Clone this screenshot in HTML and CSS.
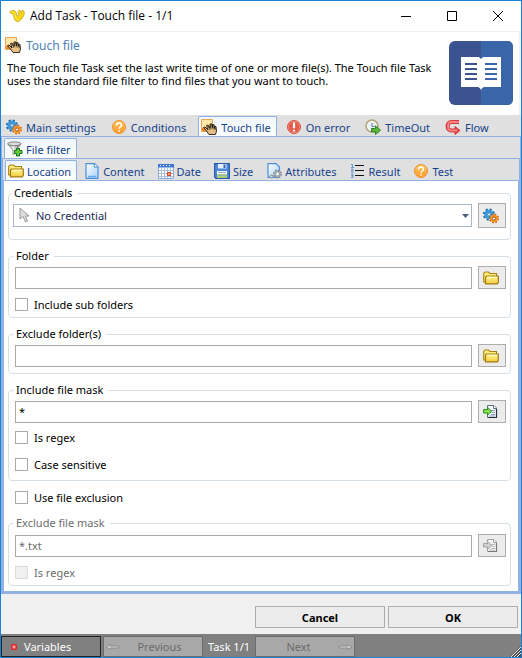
FILE: index.html
```html
<!DOCTYPE html>
<html lang="en">
<head>
<meta charset="utf-8">
<title>Add Task - Touch file - 1/1</title>
<link rel="stylesheet" href="styles.css">
</head>
<body>
<svg class="defs" aria-hidden="true">
  <defs>
    <linearGradient id="gold" x1="0" y1="0" x2="0" y2="1"><stop offset="0" stop-color="#fff79a"/><stop offset="1" stop-color="#f3cb3c"/></linearGradient>
    <linearGradient id="orange" x1="0" y1="0" x2="0" y2="1"><stop offset="0" stop-color="#ffc860"/><stop offset="1" stop-color="#fb9a2c"/></linearGradient>
    <linearGradient id="sheet" x1="0" y1="0" x2="1" y2="1"><stop offset="0" stop-color="#ffffff"/><stop offset="1" stop-color="#a9d0f5"/></linearGradient>
    <linearGradient id="metal" x1="0" y1="0" x2="1" y2="0"><stop offset="0" stop-color="#777"/><stop offset=".4" stop-color="#f4f4f4"/><stop offset="1" stop-color="#555"/></linearGradient>
  </defs>
  <symbol id="i-gears" viewBox="0 0 16 16">
    <circle cx="6" cy="6.500" r="5" fill="none" stroke="#1d6aa8" stroke-width="2.200" stroke-dasharray="2.100 1.827"/>
    <circle cx="6" cy="6.500" r="3.300" fill="#8cc8f0" stroke="#3a98dc" stroke-width="3"/>
    <circle cx="6" cy="6.500" r="1.400" fill="#e4f2fb" stroke="#1f6fae" stroke-width=".6"/>
    <circle cx="11" cy="10.500" r="4.100" fill="none" stroke="#d4620a" stroke-width="1.800" stroke-dasharray="1.700 1.520"/>
    <circle cx="11" cy="10.500" r="2.700" fill="#fff" stroke="#f7941e" stroke-width="2.200"/>
    <circle cx="11" cy="10.500" r="1.500" fill="#fff" stroke="#8f3f08" stroke-width=".8"/>
  </symbol>
  <symbol id="i-question" viewBox="0 0 16 16">
    <circle cx="8" cy="8" r="6.500" fill="url(#orange)" stroke="#f0912c"/>
    <path d="M5.500 6.500C5.500 3.300 10.500 3.300 10.500 6.200C10.500 8 8 8 8 9.800M8 11.200V12.800" fill="none" stroke="#fff" stroke-width="1.500"/>
  </symbol>
  <symbol id="i-touch" viewBox="0 0 16 16">
    <path d="M.5 .5H11.500V12.500H.5Z" fill="#ffe5a6" stroke="#e5a650"/>
    <path d="M1 9L5 8L6 12H1Z" fill="#e58b28"/>
    <path d="M2.500 8.500L4 8L7 11L5.500 6.500L7 6L9 9V5L10.500 4.800L11.500 9V5.500L13 5.600L13.500 9.500V7L15 7.500L15.500 12L14.500 15.500H8L5.500 12Z" fill="#e6be86" stroke="#241a10" stroke-width=".9"/>
    <path d="M7 7L9 11M9.500 5.500L10 10M12 6L12 10.500M14.200 8V11" stroke="#241a10" stroke-width=".7"/>
  </symbol>
  <symbol id="i-error" viewBox="0 0 16 16">
    <circle cx="8" cy="8" r="6.500" fill="#e65a49" stroke="#d4513f"/>
    <circle cx="8" cy="8" r="5.700" fill="none" stroke="#f39a8c" stroke-width=".7"/>
    <path d="M8 3.500V9.200M8 10.700V12.600" stroke="#fff" stroke-width="2.200"/>
  </symbol>
  <symbol id="i-timeout" viewBox="0 0 16 16">
    <circle cx="7" cy="7" r="6" fill="#ececec" stroke="#b0a375" stroke-width="1.500"/>
    <circle cx="7" cy="7" r="4.300" fill="#e5edf5" stroke="#fff"/>
    <path d="M7 4V7.500H9.500" fill="none" stroke="#667f99"/>
    <path d="M6.500 9.500H10.500V6.800L15.500 11.200L10.500 15.500V12.800H6.500Z" fill="#5abb39" stroke="#257719" stroke-width=".9"/>
  </symbol>
  <symbol id="i-flow" viewBox="0 0 16 16">
    <path d="M14 3H6.500C1.300 3 1.300 11.500 6.500 11.500H11" fill="none" stroke="#d9363b" stroke-width="4"/>
    <path d="M10 7.500L15 11.500L10 15.500Z" fill="#e94c50" stroke="#cf3538"/>
    <path d="M14 3H6.500C1.800 3 1.800 11.500 6.500 11.500H12" fill="none" stroke="#ff8380" stroke-width="2"/>
  </symbol>
  <symbol id="i-filter" viewBox="0 0 16 16">
    <path d="M.8 3L6 9V13.500L9 12V9L14 3Z" fill="url(#metal)" stroke="#666" stroke-width=".6"/>
    <ellipse cx="7.400" cy="2.800" rx="6.600" ry="1.900" fill="#ddd" stroke="#666" stroke-width=".8"/>
    <path d="M9.500 7.500H12.500V9.500H15V12.500H12.500V15H9.500V12.500H7.500V9.500H9.500Z" fill="#62c83e" stroke="#16741b"/>
  </symbol>
  <symbol id="i-folder" viewBox="0 0 16 16">
    <path d="M.7 12V3.500L2 2H5.500L7 3.500H13.500V12Z" fill="#fff07d" stroke="#a88013" stroke-width="1.100"/>
    <path d="M3.500 6H15.300V12.500L14.300 13.800H2.500V7Z" fill="url(#gold)" stroke="#a37a0d" stroke-width="1.200"/>
    <path d="M4 7.300H14" stroke="#fffbd0"/>
  </symbol>
  <symbol id="i-page" viewBox="0 0 16 16">
    <path d="M2 .6H10.500L14 4V15.400H2Z" fill="url(#sheet)" stroke="#4a8fdc" stroke-width="1.200"/>
    <path d="M10.300 .8V4.200H14" fill="#fff" stroke="#4a8fdc"/>
    <path d="M4 13.500H12" stroke="#5faaf0" stroke-width="1.500"/>
  </symbol>
  <symbol id="i-calendar" viewBox="0 0 16 16">
    <path d="M.5 1.500H15.500V15.500H.5Z" fill="#fff" stroke="#8ca9d2"/>
    <path d="M0 1H16V4.500H0Z" fill="#3c76d2"/>
    <path d="M2 2.500H14" stroke="#fff" stroke-dasharray="1 2"/>
    <path d="M3.500 5V15M6.500 5V15M9.500 5V15M12.500 5V15M1 7.500H15M1 10.500H15M1 13.500H15" stroke="#a9bfdf"/>
    <path d="M9.500 9.500H12.500V12.500H9.500Z" fill="#f6a07c" stroke="#d93b1d"/>
  </symbol>
  <symbol id="i-disk" viewBox="0 0 16 16">
    <path d="M.6 .6H15.400V15.400H2L.6 14Z" fill="#4d88dc" stroke="#285cab" stroke-width="1.200"/>
    <path d="M4 1H12.500V5.500H4Z" fill="#e5effb"/><path d="M9.500 1.500H11.500V5H9.500Z" fill="#3565ad"/>
    <path d="M3 8H13V15H3Z" fill="#f8fbf5"/><path d="M3 11H13V15H3Z" fill="#a8cf76"/>
    <path d="M4 9.500H12M4 12.500H12" stroke="#9bafc4"/>
  </symbol>
  <symbol id="i-attributes" viewBox="0 0 16 16">
    <path d="M2 .6H10L13.500 4V14.400H2Z" fill="url(#sheet)" stroke="#4a8fdc" stroke-width="1.200"/>
    <circle cx="11.500" cy="11" r="3.800" fill="none" stroke="#7e8790" stroke-width="1.500" stroke-dasharray="1.600 1.380"/>
    <circle cx="11.500" cy="11" r="2.400" fill="#fff" stroke="#9ca4ac" stroke-width="2"/>
    <circle cx="5.500" cy="13.500" r="1.500" fill="#ddd" stroke="#7e8790"/>
  </symbol>
  <symbol id="i-list" viewBox="0 0 16 16">
    <path d="M5 2.500H14M5 7.500H14M5 12.500H14" stroke="#111"/>
    <path d="M1 1.500H2.500V4.500M1 4.500H4M1 6H3V7.500H1.500V9H4M1 11H3V12.700H1.500H3V14.500H1" fill="none" stroke="#5b94cc" stroke-width=".9"/>
  </symbol>
  <symbol id="i-import" viewBox="0 0 16 16">
    <path d="M4.500 1.500H11L13.500 4V13.500H4.500Z" fill="#f5f8fc" stroke="#627080"/>
    <path d="M10.500 1.500V4.500H13.500" fill="#fff" stroke="#627080"/>
    <path d="M8 6.500H12M9 8.500H12M8 10.500H12M6 12H12" stroke="#7189a3" stroke-width=".8"/>
    <path d="M5 13.500H13.500V5" fill="none" stroke="#27313c" stroke-width="1.200"/>
    <path d="M.6 5.500H4.500V3.300L8.700 7.300L4.500 11.200V9H.6Z" fill="#83e052" stroke="#31891f"/>
  </symbol>
</svg>

<div class="window">
  <header class="titlebar">
    <svg class="icon" viewBox="0 0 16 16" aria-hidden="true"><path d="M.5 4.500Q3 1.500 5.500 2.500Q8 4 8 8Q10.500 8 9.500 5.500Q8.500 3 10 2.200Q11.500 2 12.300 4.500Q12.500 2 14 2.200Q16 3.500 15 7Q13.500 11.500 9 13.800Q5.500 13.500 5 9.500Q4.800 5.500 .5 4.500Z" fill="#f7d514" stroke="#c9a92c" stroke-width=".8"/><path d="M3 3.800Q6 4 6.500 9Q7 12 9 11.500" fill="none" stroke="#ffee5a"/></svg>
    <h1>Add Task - Touch file - 1/1</h1>
    <div class="controls">
      <button aria-label="Minimize"><svg viewBox="0 0 10 10"><path d="M0 5.500H10"/></svg></button>
      <button aria-label="Maximize"><svg viewBox="0 0 10 10"><path d="M.5 .5H9.500V9.500H.5Z"/></svg></button>
      <button aria-label="Close"><svg viewBox="0 0 10 10"><path d="M0 0L10 10M10 0L0 10"/></svg></button>
    </div>
  </header>

  <section class="intro">
    <div class="intro-text">
      <h2><svg class="icon" aria-hidden="true"><use href="#i-touch"/></svg>Touch file</h2>
      <p>The Touch file Task set the last write time of one or more file(s). The Touch file Task uses the standard file filter to find files that you want to touch.</p>
    </div>
    <svg class="book" viewBox="0 0 64 64" aria-hidden="true">
      <rect width="64" height="64" rx="6" fill="#3b5391"/>
      <path d="M32 0H58Q64 0 64 6V58Q64 64 58 64H32Z" fill="#3a66a9"/>
      <path d="M12 16H30L32 18L34 16H52V46H35Q32 47 32 50Q32 47 29 46H12Z" fill="#fff"/>
      <path d="M16 23H28M16 28H28M16 33H28M16 38H28" stroke="#3b5391" stroke-width="2"/>
      <path d="M36 23H48M36 28H48M36 33H48M36 38H48" stroke="#3a66a9" stroke-width="2"/>
    </svg>
  </section>

  <nav class="tabs" role="tablist" aria-label="Task">
    <button class="tab" role="tab"><svg class="icon"><use href="#i-gears"/></svg>Main settings</button>
    <button class="tab" role="tab"><svg class="icon"><use href="#i-question"/></svg>Conditions</button>
    <button class="tab active" role="tab" aria-selected="true"><svg class="icon"><use href="#i-touch"/></svg>Touch file</button>
    <button class="tab" role="tab"><svg class="icon"><use href="#i-error"/></svg>On error</button>
    <button class="tab" role="tab"><svg class="icon"><use href="#i-timeout"/></svg>TimeOut</button>
    <button class="tab" role="tab"><svg class="icon"><use href="#i-flow"/></svg>Flow</button>
  </nav>
  <div class="panel">
    <nav class="tabs small" role="tablist" aria-label="Touch file">
      <button class="tab active" role="tab" aria-selected="true"><svg class="icon"><use href="#i-filter"/></svg>File filter</button>
    </nav>
    <div class="panel">
      <nav class="tabs small" role="tablist" aria-label="File filter">
        <button class="tab active" role="tab" aria-selected="true"><svg class="icon"><use href="#i-folder"/></svg>Location</button>
        <button class="tab" role="tab"><svg class="icon"><use href="#i-page"/></svg>Content</button>
        <button class="tab" role="tab"><svg class="icon"><use href="#i-calendar"/></svg>Date</button>
        <button class="tab" role="tab"><svg class="icon"><use href="#i-disk"/></svg>Size</button>
        <button class="tab" role="tab"><svg class="icon"><use href="#i-attributes"/></svg>Attributes</button>
        <button class="tab" role="tab"><svg class="icon"><use href="#i-list"/></svg>Result</button>
        <button class="tab" role="tab"><svg class="icon"><use href="#i-question"/></svg>Test</button>
      </nav>
      <form class="panel form">
        <fieldset class="credentials">
          <legend>Credentials</legend>
          <div class="row">
            <div class="combo">
              <svg class="icon pointer" viewBox="0 0 16 16" aria-hidden="true"><path d="M3 1V12L6 9.500L8.500 15L10.500 14L8.500 9H12Z" fill="#ddd" stroke="#999"/></svg>
              <select aria-label="Credential"><option>No Credential</option></select>
              <svg class="arrow" viewBox="0 0 7 4" aria-hidden="true"><path d="M0 0H7L3.500 4Z" fill="#4a5f85"/></svg>
            </div>
            <button type="button" class="pick" aria-label="Manage credentials"><svg class="icon"><use href="#i-gears"/></svg></button>
          </div>
        </fieldset>
        <fieldset>
          <legend>Folder</legend>
          <div class="row">
            <input type="text" aria-label="Folder">
            <button type="button" class="pick" aria-label="Browse folder"><svg class="icon"><use href="#i-folder"/></svg></button>
          </div>
          <label class="check"><input type="checkbox">Include sub folders</label>
        </fieldset>
        <fieldset>
          <legend>Exclude folder(s)</legend>
          <div class="row">
            <input type="text" aria-label="Exclude folders">
            <button type="button" class="pick" aria-label="Browse excluded folder"><svg class="icon"><use href="#i-folder"/></svg></button>
          </div>
        </fieldset>
        <fieldset class="include">
          <legend>Include file mask</legend>
          <div class="row">
            <input type="text" aria-label="Include file mask" value="*">
            <button type="button" class="pick" aria-label="Insert include mask"><svg class="icon"><use href="#i-import"/></svg></button>
          </div>
          <label class="check"><input type="checkbox">Is regex</label>
          <label class="check"><input type="checkbox">Case sensitive</label>
        </fieldset>
        <label class="check exclusion"><input type="checkbox">Use file exclusion</label>
        <fieldset class="exclude-mask" disabled>
          <legend>Exclude file mask</legend>
          <div class="row">
            <input type="text" aria-label="Exclude file mask" value="*.txt">
            <button type="button" class="pick" aria-label="Insert exclude mask"><svg class="icon"><use href="#i-import"/></svg></button>
          </div>
          <label class="check"><input type="checkbox">Is regex</label>
        </fieldset>
      </form>
    </div>
  </div>

  <div class="actions">
    <button>Cancel</button>
    <button>OK</button>
  </div>
  <footer class="status">
    <button class="variables"><svg class="dot" viewBox="0 0 6 6" aria-hidden="true"><rect width="6" height="6" rx="1.500" fill="#d8282c"/><rect x="1.500" y="1.500" width="3" height="3" fill="#ff9b94"/></svg>Variables</button>
    <button class="step" disabled><svg class="prev" viewBox="0 0 13 6" aria-hidden="true"><path d="M0 3L4 .5V2H12.500V4H4V5.500Z"/></svg><span>Previous</span></button>
    <span class="count">Task 1/1</span>
    <button class="step next" disabled><span>Next</span><svg viewBox="0 0 13 6" aria-hidden="true"><path d="M13 3L9 .5V2H.5V4H9V5.500Z"/></svg></button>
    <svg class="grip" viewBox="0 0 11 11" aria-hidden="true"><path d="M0 11L11 0V11Z" fill="#4a4a4a"/><path d="M1 11L11 1M4 11L11 4M7 11L11 7" stroke="#eee"/></svg>
  </footer>
</div>
</body>
</html>
```
FILE: styles.css
```css
* { box-sizing: border-box; }

body {
  margin: 0;
  font: 11px/13px "Noto Sans", "Open Sans", sans-serif;
  color: #000;
  background: #fff;
}

button, input, select { font: inherit; color: inherit; margin: 0; border-radius: 0; }
button { padding: 0; }
h1, h2, p { margin: 0; font-weight: normal; }

.defs { position: absolute; width: 0; height: 0; }
.icon { width: 16px; height: 16px; flex: none; display: block; }

.window {
  display: flex;
  flex-direction: column;
  min-height: 100vh;
  border: 1px solid #1883d7;
}

/* Title bar */
.titlebar {
  display: flex;
  align-items: center;
  gap: 5px;
  height: 31px;
  padding-left: 8px;
  border-bottom: 1px solid #f0f0f0;
}
.titlebar h1 { flex: 1; font: 12px/16px "Open Sans", "Noto Sans", sans-serif; }
.controls { display: flex; }
.controls button {
  display: grid;
  place-items: center;
  width: 46px;
  height: 28px;
  border: 0;
  background: none;
}
.controls svg { width: 10px; height: 10px; fill: none; stroke: #000; }

/* Task description */
.intro {
  display: flex;
  justify-content: space-between;
  height: 83px;
  padding: 5px 6px 0 4px;
  border-right: 2px solid #f0f0f0;
}
.intro h2 {
  display: flex;
  align-items: center;
  gap: 5px;
  height: 16px;
  font-size: 12px;
  color: #4a80b8;
}
.intro p { margin: 8px 0 0 2px; max-width: 430px; }
.book { width: 64px; height: 64px; margin-top: 4px; flex: none; }

/* Nested tabs */
.tabs {
  display: flex;
  gap: 6px;
  height: 21px;
  padding: 1px 0 0 2px;
  background: #e0e0e0;
}
.tabs.small { gap: 4px; }
.tab {
  display: flex;
  align-items: center;
  gap: 4px;
  height: 21px;
  padding: 0 5px 0 2px;
  border: 1px solid transparent;
  border-bottom: 0;
  background: none;
  color: #15428b;
  white-space: nowrap;
}
.tabs.small .tab { gap: 3px; }
.tab.active {
  border-color: #8db2e3;
  border-radius: 2px 2px 0 0;
  background: linear-gradient(#eff6fd, #fff);
}
.panel {
  flex: 1;
  display: flex;
  flex-direction: column;
  border: 1px solid #92b1e2;
}
.form { display: block; padding: 5px 7px 5px 4px; background: #fff; }

/* Groups */
fieldset {
  margin: 0 0 9px;
  padding: 2px 4px 6px 6px;
  border: 1px solid #d5dfe5;
  border-radius: 4px;
  min-width: 0;
}
legend { height: 15px; margin-left: -1px; padding: 0 5px 0 2px; line-height: 13px; }
.row { display: flex; align-items: center; gap: 6px; }
.row input {
  flex: 1;
  min-width: 0;
  height: 22px;
  padding: 0 3px;
  border: 1px solid #a9a9a9;
  background: #fff;
}
.pick {
  display: grid;
  place-items: center;
  width: 28px;
  height: 23px;
  padding-right: 2px;
  border: 1px solid #adadad;
  background: #ececec;
}
.credentials { padding: 2px 4px 11px; }
.credentials .pick { height: 25px; }
.combo { position: relative; flex: 1; }
.combo select {
  display: block;
  width: 100%;
  height: 23px;
  padding: 0 22px;
  border: 1px solid #abb8cc;
  background: #fff;
  color: #1c2a55;
  appearance: none;
}
.pointer { position: absolute; left: 4px; top: 3px; }
.arrow { position: absolute; right: 3px; top: 10px; width: 7px; height: 4px; }

.check { display: flex; align-items: center; gap: 6px; height: 13px; margin-top: 9px; }
.check input {
  appearance: none;
  width: 13px;
  height: 13px;
  border: 1px solid #a9a9a9;
  background: #fff;
}
.include { padding-bottom: 9px; }
.include .check { margin-top: 8px; }
.include .check + .check { margin-top: 14px; }
.exclusion { margin: 10px 7px 12px; }
.exclude-mask { margin-bottom: 0; padding-top: 3px; color: #6d6d6d; }
.exclude-mask .check input { border-color: #dcdcdc; background: #f0f0f0; }
.exclude-mask .pick .icon { filter: grayscale(1); opacity: .6; }

/* Buttons and status bar */
.actions {
  display: flex;
  justify-content: flex-end;
  gap: 3px;
  padding: 12px 3px 6px;
  background: #f0f0f0;
}
.actions button {
  width: 130px;
  height: 22px;
  border: 1px solid #adadad;
  background: #ececec;
  font-weight: bold;
}
.status {
  position: relative;
  display: flex;
  align-items: center;
  gap: 2px;
  height: 23px;
  padding-top: 2px;
  background: #808080;
  color: #fff;
}
.status button {
  display: flex;
  align-items: center;
  width: 100px;
  height: 21px;
  border: 1px solid #6b6b6b;
  background: #a8a8a8;
}
.status .variables { gap: 7px; padding-left: 9px; border-color: #222; background: #808080; }
.dot { width: 6px; height: 6px; }
.status .step { padding: 0 2px; color: #6b6b6b; }
.step span { flex: 1; text-align: center; }
.step svg { width: 13px; height: 6px; fill: #ccc; stroke: #777; stroke-width: .6; }
.count { width: 48px; text-align: center; }
.grip { position: absolute; right: 0; bottom: 0; width: 11px; height: 11px; }
```
